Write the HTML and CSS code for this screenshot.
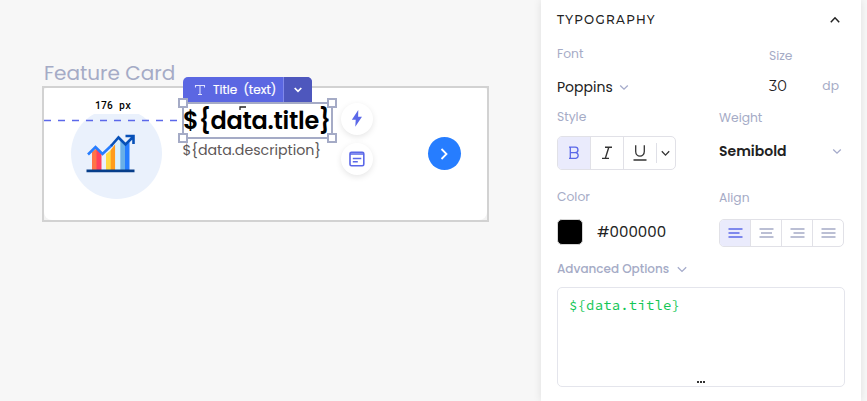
FILE: index.html
```html
<!DOCTYPE html>
<html lang="en">
<head>
<meta charset="utf-8">
<title>Feature Card editor</title>
<link rel="stylesheet" href="styles.css">
</head>
<body>
<div class="app">
  <main class="canvas">
    <div class="artboard-name"><span class="t-name">Feature Card</span></div>
    <div class="artboard"><div class="card"></div></div>
    <div class="avatar">
      <svg width="50" height="40" viewBox="0 0 50 40">
        <path fill="#ff7447" d="M6 18l5-4v23H6z"/><path fill="#ff415d" d="M10.500 14l5 5v18h-5z"/>
        <path fill="#ffda44" d="M20 20l5-4v21h-5z"/><path fill="#ff9c1b" d="M24.700 16l4.600-6v27h-4.600z"/>
        <path fill="#d7f0ff" d="M29.300 10l5-5v32h-5z"/><path fill="#69afe8" d="M34.300 6l5 5v26h-5z"/><path fill="#267dff" d="M39 12l4.500-4v29H39z"/>
        <path fill="none" stroke="#267dff" stroke-width="2.600" d="M2 20.500l7.500-7.500 7 7L26 11"/>
        <path fill="none" stroke="#0750b8" stroke-width="2.600" d="M25 12l7.500-8.500 7 7L47 3M39.500 2H47.500V10"/>
        <path fill="#073e8a" d="M.500 35.500h48v2.800H.500z"/>
      </svg>
    </div>
    <div class="distance"><span class="t-dist">176 px</span></div>
    <svg class="guide" width="134" height="3"><path d="M0 1.500h134" stroke="#5b68ea" stroke-width="1.600" stroke-dasharray="7 7"/></svg>
    <div class="desc"><span class="t-desc">${data.description}</span></div>
    <div class="selection"></div>
    <div class="tag">
      <div class="tag-main">
        <svg width="12" height="12" viewBox="0 0 12 12"><path d="M1.500 3.500V1.500h9v2M6 1.500v9M4 10.500h4" fill="none" stroke="#dfe2ff" stroke-width="1.100"/></svg>
        <span class="t-tag">Title (text)</span>
      </div>
      <div class="tag-more"><svg width="10" height="8" viewBox="0 0 10 8"><path d="M1.700 2L5 5.400 8.300 2" fill="none" stroke="#fff" stroke-width="1.700"/></svg></div>
    </div>
    <div class="title"><span class="t-title">${data.title}</span></div>
    <svg class="tick" width="8" height="5"><path d="M1 4V1h6" fill="none" stroke="#222" stroke-width="1.300"/></svg>
    <i class="handle tl"></i><i class="handle tr"></i><i class="handle bl"></i><i class="handle br"></i>
    <div class="fab action"><svg width="12" height="19" viewBox="0 0 14 20"><path fill="#5b68e8" d="M8.500 0L1 11.500h4.500L5 19.500 12.800 8H8.300z"/></svg></div>
    <div class="fab note"><svg width="16" height="16" viewBox="0 0 16 16"><rect x="1" y="1.200" width="13.800" height="13.600" rx="1.500" fill="none" stroke="#5b68e8" stroke-width="1.600"/><path d="M1 3h14M3.800 7.500h8.500M3.800 10.800h5" fill="none" stroke="#5b68e8" stroke-width="1.600"/></svg></div>
    <div class="go"><svg width="10" height="14" viewBox="0 0 10 14"><path d="M2.500 2l5 5-5 5" fill="none" stroke="#fff" stroke-width="1.800"/></svg></div>
  </main>

  <aside class="panel">
    <header class="panel-head">
      <span class="t-head">TYPOGRAPHY</span>
      <svg width="10" height="8" viewBox="0 0 10 8"><path d="M.800 6.200L5 1.800l4.200 4.400" fill="none" stroke="#222" stroke-width="1.500"/></svg>
    </header>
    <div class="fields">
      <div class="col">
        <div class="label"><span class="t-font">Font</span></div>
        <div class="value font-value"><span class="t-poppins">Poppins</span><svg width="10" height="7" viewBox="0 0 10 7"><path d="M1.200 1.500L5 5.200l3.800-3.700" fill="none" stroke="#a5abcb" stroke-width="1.300"/></svg></div>
        <div class="label"><span class="t-style">Style</span></div>
        <div class="style-group">
          <div class="cell on"><svg width="12" height="14" viewBox="0 0 12 14"><path d="M1 1.200h6.200a2.700 2.700 0 0 1 0 5.500H2.200M2.200 6.700h5.600a2.900 2.900 0 0 1 0 5.700H1M2.300 1.200v11.200" fill="none" stroke="#5b68e8" stroke-width="1.300"/></svg></div>
          <div class="cell"><svg width="12" height="14" viewBox="0 0 12 14"><path d="M4 1.200h7M1 12.400h7M7.800 1.200L4.300 12.400" fill="none" stroke="#333" stroke-width="1.400"/></svg></div>
          <div class="cell wide">
            <svg width="14" height="16" viewBox="0 0 14 16"><path d="M2.700.300v6.200a4.300 4.700 0 0 0 8.600 0V.300M.500 15h13" fill="none" stroke="#333" stroke-width="1.300"/></svg>
            <span class="split"></span>
            <svg width="9" height="7" viewBox="0 0 9 7"><path d="M.800 1.200l3.700 3.900 3.700-3.900" fill="none" stroke="#333" stroke-width="1.300"/></svg>
          </div>
        </div>
        <div class="label"><span class="t-color">Color</span></div>
        <div class="color-row"><i class="swatch"></i><span class="t-hex">#000000</span></div>
      </div>
      <div class="col right">
        <div class="label indent"><span class="t-size">Size</span></div>
        <div class="value size-value"><span class="t-thirty">30</span><span class="t-dp">dp</span></div>
        <div class="label"><span class="t-weight">Weight</span></div>
        <div class="value weight-value"><span class="t-semi">Semibold</span><svg width="10" height="7" viewBox="0 0 10 7"><path d="M1.200 1.500L5 5.200l3.800-3.700" fill="none" stroke="#a5abcb" stroke-width="1.300"/></svg></div>
        <div class="label"><span class="t-align">Align</span></div>
        <div class="align-group">
          <div class="cell on"><svg width="15" height="10" viewBox="0 0 15 10"><path d="M.500 1h14M.500 5h11M.500 9h14"/></svg></div>
          <div class="cell"><svg width="15" height="10" viewBox="0 0 15 10"><path d="M.500 1h14M2 5h11M.500 9h14"/></svg></div>
          <div class="cell"><svg width="15" height="10" viewBox="0 0 15 10"><path d="M.500 1h14M3.500 5h11M.500 9h14"/></svg></div>
          <div class="cell"><svg width="15" height="10" viewBox="0 0 15 10"><path d="M.500 1h14M.500 5h14M.500 9h14"/></svg></div>
        </div>
      </div>
    </div>
    <div class="advanced"><span class="t-adv">Advanced Options</span><svg width="10" height="7" viewBox="0 0 10 7"><path d="M.800 1.200L5 5.400l4.200-4.200" fill="none" stroke="#a5abcb" stroke-width="1.300"/></svg></div>
    <div class="code"><span class="t-code">${data.title}</span><div class="grip"><i></i><i></i><i></i></div></div>
  </aside>
</div>
</body>
</html>
```
FILE: styles.css
```css
* { box-sizing: border-box; }
body { margin: 0; background: #f7f7f7; font-family: Poppins, Inter, sans-serif; color: #222; }
svg { display: block; flex: none; }
span { white-space: pre; }
.app { display: flex; width: 867px; height: 401px; overflow: hidden; }
.canvas { position: relative; width: 541px; flex: none; }
.canvas > * { position: absolute; }

.artboard-name { left: 44px; top: 60px; line-height: 26px; color: #a5abc6; font-size: 20px; }
.artboard { left: 42px; top: 86px; width: 447px; height: 136px; border: 2px solid #d2d2d2; background: #f3f3f3; }
.card { height: 100%; background: #fff; border-radius: 3px 3px 8px 8px; }
.avatar { left: 70.5px; top: 108px; width: 91px; height: 91px; border-radius: 50%; background: #eaf1fc; padding: 26px 0 0 15px; }
.distance { left: 84px; top: 98px; width: 62px; height: 16px; background: #fff; padding-left: 11px; line-height: 16px; font-family: "Roboto Mono", "Liberation Mono", monospace; font-size: 10px; font-weight: 500; color: #000; }
.guide { left: 44px; top: 119px; }
.desc { left: 182.5px; top: 140px; line-height: 20px; font-size: 14.2px; color: #5d5757; }
.selection { left: 182px; top: 102px; width: 151px; height: 37px; border: 2px solid #a5abc6; }
.tag { left: 183px; top: 77px; width: 129px; height: 25px; display: flex; border-radius: 5px 5px 0 0; overflow: hidden; background: #5b67e2; color: #fff; font-size: 12px; }
.tag-main { width: 101px; display: flex; align-items: center; gap: 7px; padding-left: 11px; border-right: 1px solid #8088ea; }
.tag-more { flex: 1; display: flex; align-items: center; justify-content: center; background: #4e57bd; }
.title { left: 183px; top: 104px; line-height: 34px; font-size: 24px; font-weight: 600; letter-spacing: -.25px; color: #000; }
.tick { left: 239px; top: 106px; }
.handle { width: 10px; height: 10px; border: 2px solid #a5abc6; background: #fff; }
.tl { left: 178px; top: 98px; }
.tr { left: 327px; top: 98px; }
.bl { left: 178px; top: 133px; }
.br { left: 327px; top: 133px; }
.fab { left: 340.5px; width: 32px; height: 32px; border-radius: 50%; background: #fff; box-shadow: 0 2px 6px rgba(0, 0, 0, .1); display: flex; align-items: center; justify-content: center; }
.action { top: 102.5px; }
.note { top: 142.5px; }
.go { left: 427.500px; top: 137px; width: 33px; height: 33px; border-radius: 50%; background: #267dff; display: flex; align-items: center; justify-content: center; }

.panel { width: 320px; background: #fff; padding: 0 16px; box-shadow: 0 0 8px rgba(0, 0, 0, .1); }
.panel-head { height: 39px; display: flex; align-items: center; justify-content: space-between; padding-right: 5px; }
.fields { display: flex; height: 220px; }
.col { width: 162px; padding-top: 5px; }
.right { width: 126px; padding-top: 7px; }
.label { height: 20px; line-height: 20px; font-size: 12.3px; color: #a5abc6; }
.value { height: 24px; display: flex; align-items: center; }
.font-value { margin: 11px 0 8px; gap: 6px; }
.style-group, .align-group { display: flex; border: 1px solid #e1e1e7; border-radius: 5px; overflow: hidden; }
.style-group { width: 119px; height: 34px; margin: 9px 0 17px; }
.cell { display: flex; align-items: center; justify-content: center; border-right: 1px solid #e1e1e7; }
.cell:last-child { border-right: 0; }
.on { background: #eaebfc; }
.style-group .cell { width: 33px; }
.style-group .wide { width: 51px; justify-content: flex-start; padding-left: 9px; }
.split { width: 1px; height: 20px; background: #dfe0e7; margin: 0 4px 0 9px; }
.color-row { height: 26px; margin-top: 12px; display: flex; align-items: center; gap: 14px; }
.swatch { width: 26px; height: 26px; border: 1px solid #d5d5d5; border-radius: 5px; background: #000; }
.indent { padding-left: 50px; }
.size-value { margin: 8px 0 10px; padding: 0 6px 0 50px; justify-content: space-between; }
.weight-value { margin: 11px 0 25px; justify-content: space-between; padding-right: 3px; }
.align-group { width: 125px; height: 28px; margin-top: 11px; }
.align-group .cell { flex: 1; }
.align-group path { fill: none; stroke: #a5abc6; stroke-width: 1.300px; }
.align-group .on path { stroke: #5b68e8; }
.advanced { height: 20px; display: flex; align-items: center; gap: 8px; color: #a5abc6; }
.code { position: relative; height: 100px; margin-top: 8px; border: 1px solid #e4e5ec; border-radius: 5px; padding: 6px 11px; line-height: 20px; color: #12c655; font-family: "Source Code Pro", "Roboto Mono", "Liberation Mono", monospace; }
.grip { position: absolute; left: 139px; bottom: 3px; display: flex; gap: 1px; }
.grip i { width: 2px; height: 2px; background: #333; }

.t-tag { word-spacing: 3px; -webkit-text-stroke: .2px #fff; }
.t-head { font-family: Montserrat, Poppins, Inter, sans-serif; font-size: 12px; font-weight: 500; letter-spacing: 1.3px; }
.t-poppins { font-size: 14px; }
.t-thirty { font-family: Montserrat, Poppins, Inter, sans-serif; font-size: 14.5px; }
.t-dp { font-size: 12.3px; color: #a5abc6; }
.t-semi { font-size: 14px; font-weight: 600; }
.t-hex { font-size: 15px; margin-bottom: 2px; }
.t-adv { font-size: 12px; font-weight: 500; }
.t-code { font-size: 14px; letter-spacing: .15px; }
```
